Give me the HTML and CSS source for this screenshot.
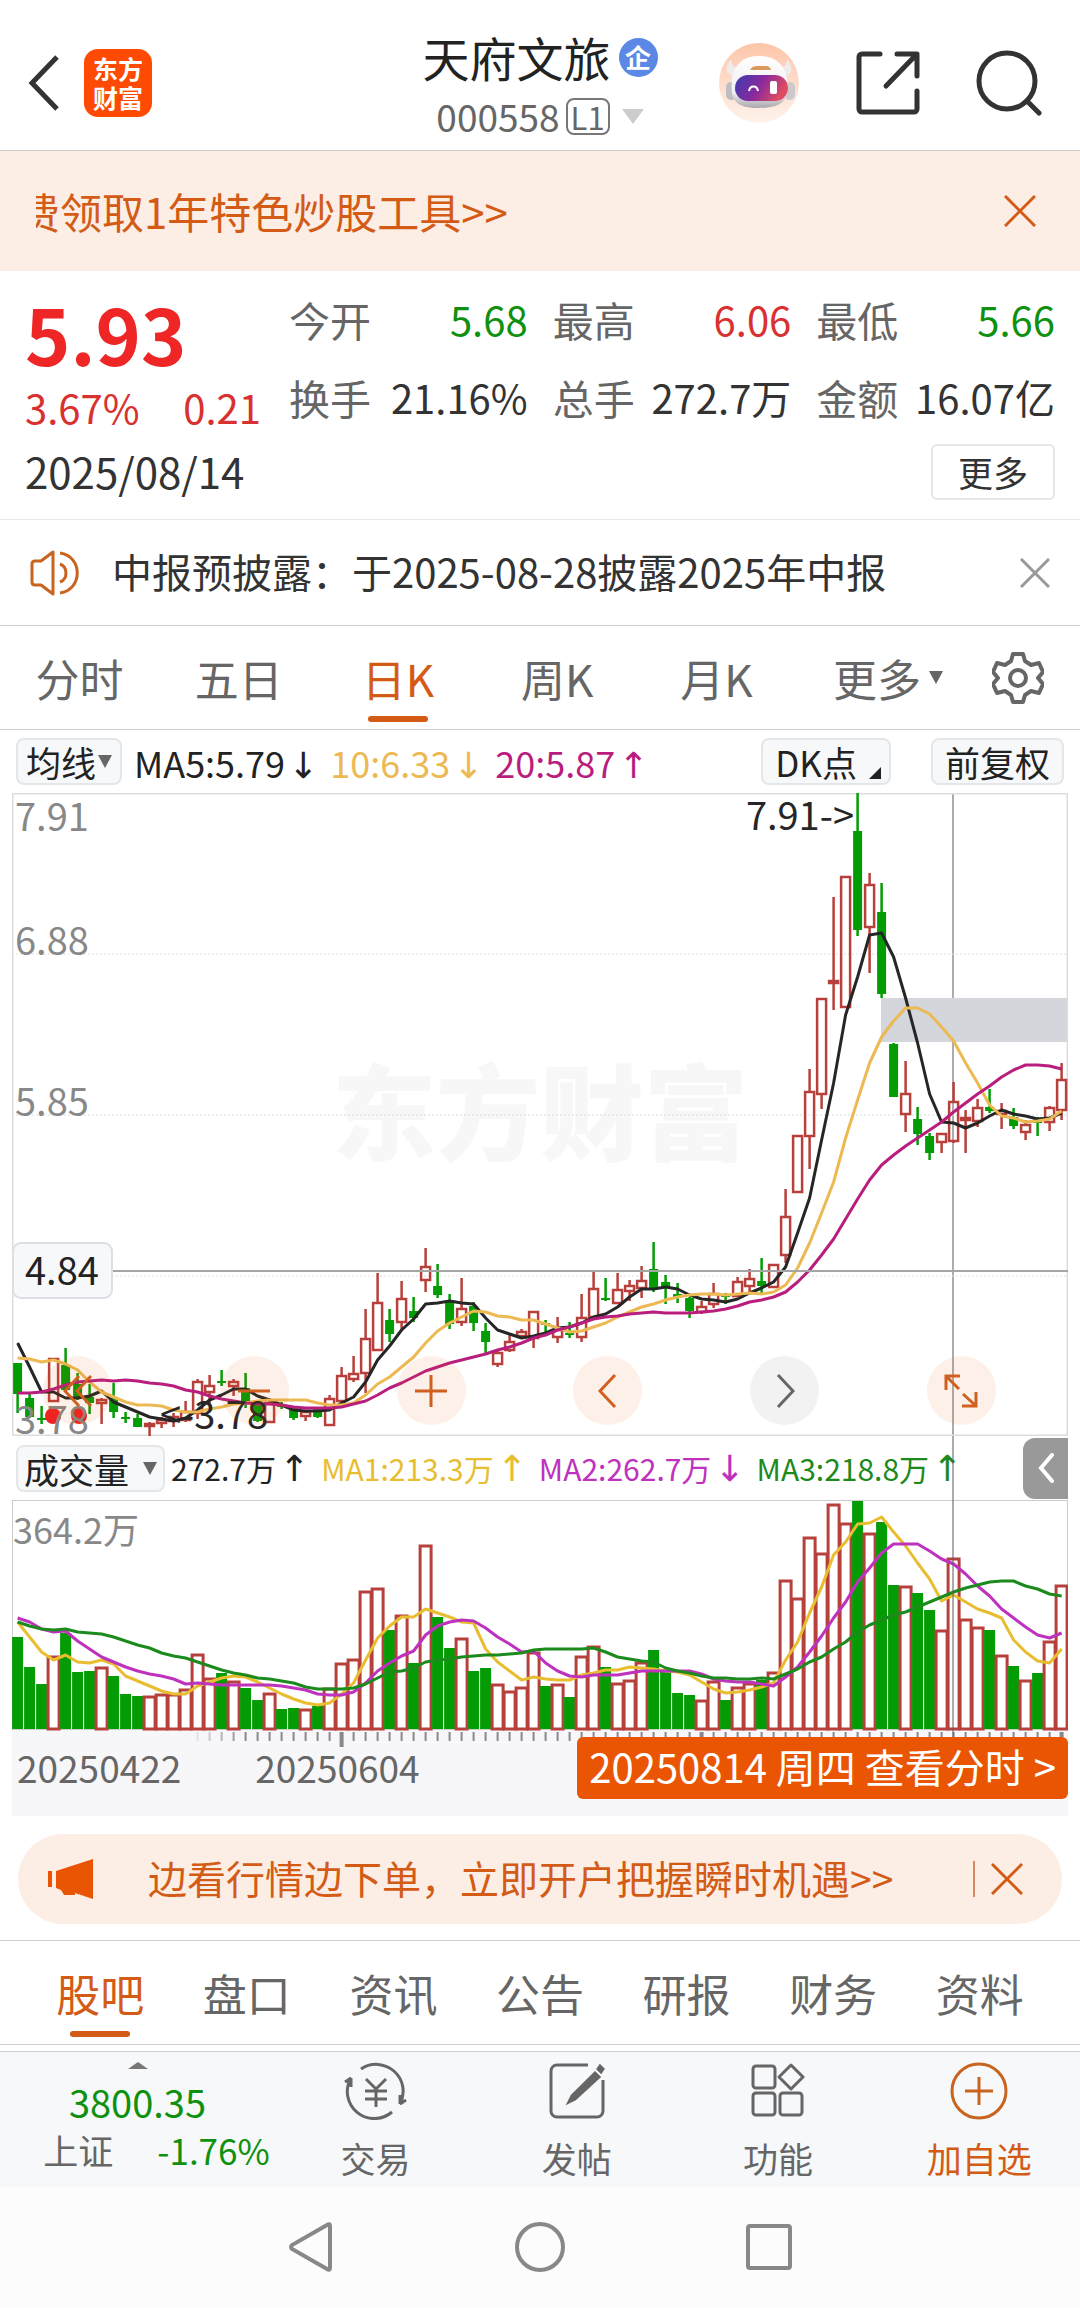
FILE: index.html
```html
<!DOCTYPE html>
<html lang="zh-CN">
<head>
    <meta charset="UTF-8">
    <meta name="viewport" content="width=device-width, initial-scale=1">
    <title>天府文旅 000558</title>
    <link rel="stylesheet" href="styles.css">
</head>
<body>
    <header class="header">
        <div class="header-left">
            <button class="icon-btn" aria-label="返回">
                <svg width="32" height="56" viewBox="0 0 32 56" fill="none" stroke="#333" stroke-width="5"><path d="M29 2 4 28l25 26"/></svg>
            </button>
            <a class="logo" href="#"><span>东方</span><span>财富</span></a>
        </div>
        <div class="header-title">
            <h1>天府文旅<span class="badge">企</span></h1>
            <p class="code">000558<span class="level">L1</span>
                <svg width="22" height="15" viewBox="0 0 22 15" fill="#ccc"><path d="M0 0h22L11 15z"/></svg>
            </p>
        </div>
        <div class="header-right">
            <button class="icon-btn" aria-label="智能助手">
                <svg width="82" height="82" viewBox="0 0 82 82">
                    <defs>
                        <linearGradient id="robotBg" x1="0" y1="0" x2="0" y2="1"><stop offset="0" stop-color="#fdc5a8"/><stop offset="1" stop-color="#fff3ec"/></linearGradient>
                        <linearGradient id="robotFace" x1="0" y1="0" x2="1" y2="0.3"><stop offset="0" stop-color="#3b3bb0"/><stop offset="0.55" stop-color="#8a2a9c"/><stop offset="1" stop-color="#e04a62"/></linearGradient>
                        <linearGradient id="robotHead" x1="0" y1="0" x2="0" y2="1"><stop offset="0" stop-color="#fff"/><stop offset="0.7" stop-color="#f1eef1"/><stop offset="1" stop-color="#a9a6ad"/></linearGradient>
                    </defs>
                    <circle cx="41" cy="41" r="40" fill="url(#robotBg)"/>
                    <path d="M13 17c-7 8-5 15 2 18l9-8c-6 0-11-3-11-10zM69 17c7 8 5 15-2 18l-9-8c6 0 11-3 11-10z" fill="#f1eaea"/>
                    <rect x="8" y="40" width="11" height="18" rx="5" fill="#c0bcc3"/>
                    <rect x="66" y="40" width="11" height="18" rx="5" fill="#cfc9ce"/>
                    <path d="M41 14c16 0 25 8 28 22 3 20-2 30-28 30S12 56 14 36c3-14 11-22 27-22z" fill="url(#robotHead)"/>
                    <path d="M32 28q2-4 7-4h9q4 0 5 4z" fill="#d99a5b"/>
                    <rect x="17" y="33" width="53" height="26" rx="13" fill="url(#robotFace)"/>
                    <path d="M31 49c1-6 8-6 9 0" fill="none" stroke="#fff" stroke-width="2"/>
                    <rect x="52" y="39" width="7" height="13" rx="2" fill="#fff"/>
                </svg>
            </button>
            <button class="icon-btn" aria-label="分享">
                <svg width="64" height="64" viewBox="0 0 64 64" fill="none" stroke="#333" stroke-width="5" stroke-linecap="round" stroke-linejoin="round"><path d="M24 3H6a3 3 0 0 0-3 3v52a3 3 0 0 0 3 3h52a3 3 0 0 0 3-3V40M41 3h20v22M60 4 30 35"/></svg>
            </button>
            <button class="icon-btn" aria-label="搜索">
                <svg width="66" height="66" viewBox="0 0 66 66" fill="none" stroke="#333" stroke-width="5" stroke-linecap="round"><circle cx="31" cy="31" r="28"/><path d="m51 51 12 12"/></svg>
            </button>
        </div>
    </header>

    <div class="banner">
        <p>费领取1年特色炒股工具&gt;&gt;</p>
        <button class="icon-btn" aria-label="关闭">
            <svg width="32" height="32" viewBox="0 0 32 32" fill="none" stroke="#d35b16" stroke-width="3"><path d="m1 1 30 30M31 1 1 31"/></svg>
        </button>
    </div>

    <section class="quote">
        <div class="quote-main">
            <strong class="price up">5.93</strong>
            <p class="change up"><span>3.67%</span><span>0.21</span></p>
            <p class="date">2025/08/14</p>
        </div>
        <dl class="quote-grid">
            <div><dt>今开</dt><dd class="down">5.68</dd></div>
            <div><dt>最高</dt><dd class="up">6.06</dd></div>
            <div><dt>最低</dt><dd class="down">5.66</dd></div>
            <div><dt>换手</dt><dd>21.16%</dd></div>
            <div><dt>总手</dt><dd>272.7万</dd></div>
            <div><dt>金额</dt><dd>16.07亿</dd></div>
        </dl>
        <button class="quote-more">更多</button>
    </section>

    <div class="notice">
        <svg width="50" height="46" viewBox="0 0 50 46" fill="none" stroke="#c8641e" stroke-width="3" stroke-linejoin="round"><path d="M2 14q0-3 3-3h6L23 2v42l-12-9H5q-3 0-3-3zM30 14c8 3 8 15 0 18M30 3c23 3 23 37 0 40"/></svg>
        <p>中报预披露：于2025-08-28披露2025年中报</p>
        <button class="icon-btn" aria-label="关闭">
            <svg width="30" height="30" viewBox="0 0 30 30" fill="none" stroke="#999" stroke-width="3"><path d="m1 1 28 28M29 1 1 29"/></svg>
        </button>
    </div>

    <nav class="tabs period-tabs">
        <button>分时</button>
        <button>五日</button>
        <button class="active">日K</button>
        <button>周K</button>
        <button>月K</button>
        <button>更多<span class="caret"></span></button>
        <button aria-label="设置">
            <svg width="52" height="52" viewBox="0 0 52 52" fill="none" stroke="#666" stroke-width="4" stroke-linejoin="round"><path d="M21 2h10l2 7 6 4 8-2 4 9-5 6 5 6-4 9-8-2-6 4-2 7H21l-2-7-6-4-8 2-4-9 5-6-5-6 4-9 8 2 6-4z"/><circle cx="26" cy="26" r="8"/></svg>
        </button>
    </nav>

    <main class="chart">
        <div class="indicator-row">
            <button class="chip">均线<span class="caret"></span></button>
            <span class="ma-black">MA5:5.79<i class="arrow">↓</i></span>
            <span class="ma-yellow">10:6.33<i class="arrow">↓</i></span>
            <span class="ma-pink">20:5.87<i class="arrow">↑</i></span>
            <button class="chip chip-dk">DK点<span class="corner"></span></button>
            <button class="chip">前复权</button>
        </div>

        <div class="plot">
            <div class="crosshair"></div>
            <div class="price-box">
                <svg id="priceChart" viewBox="0 0 1056 643"></svg>
                <div class="chart-tools">
                    <button aria-label="最前"><svg width="30" height="34" viewBox="0 0 30 34"><path d="M16 2 2 17l14 15M28 2 14 17l14 15"/></svg></button>
                    <button aria-label="缩小"><svg width="34" height="34" viewBox="0 0 34 34"><path d="M1 17h32"/></svg></button>
                    <button aria-label="放大"><svg width="34" height="34" viewBox="0 0 34 34"><path d="M1 17h32M17 1v32"/></svg></button>
                    <button aria-label="左移"><svg width="20" height="34" viewBox="0 0 20 34"><path d="M17 1 2 17l15 16"/></svg></button>
                    <button aria-label="右移" class="disabled"><svg width="20" height="34" viewBox="0 0 20 34"><path d="m3 1 15 16L3 33"/></svg></button>
                    <button aria-label="全屏"><svg width="34" height="34" viewBox="0 0 34 34"><path d="M16 2H2v14M3 3l12 12M18 32h14V18M31 31 19 20"/></svg></button>
                </div>
            </div>
            <div class="indicator-row volume-row">
                <button class="chip">成交量<span class="caret"></span></button>
                <span class="ma-black">272.7万<i class="arrow">↑</i></span>
                <span class="vol-yellow">MA1:213.3万<i class="arrow">↑</i></span>
                <span class="vol-purple">MA2:262.7万<i class="arrow">↓</i></span>
                <span class="vol-green">MA3:218.8万<i class="arrow">↑</i></span>
                <button class="drawer" aria-label="展开">
                    <svg width="16" height="30" viewBox="0 0 16 30" fill="none" stroke="#fff" stroke-width="4" stroke-linecap="round"><path d="M14 2 3 15l11 13"/></svg>
                </button>
            </div>
            <svg id="volumeChart" viewBox="0 0 1056 248"></svg>
        </div>

        <div class="axis">
            <span>20250422</span>
            <span>20250604</span>
            <button>20250814 周四 查看分时 &gt;</button>
        </div>
    </main>

    <div class="promo">
        <svg width="46" height="40" viewBox="0 0 46 40" fill="#ea5504"><path d="M0 12h4v16H0zM8 12 45 0v40l-18-6v2H16l-3-5-5-2z"/></svg>
        <p>边看行情边下单，立即开户把握瞬时机遇&gt;&gt;</p>
        <button class="icon-btn" aria-label="关闭">
            <svg width="32" height="32" viewBox="0 0 32 32" fill="none" stroke="#d35b16" stroke-width="3"><path d="m1 1 30 30M31 1 1 31"/></svg>
        </button>
    </div>

    <nav class="tabs info-tabs">
        <button class="active">股吧</button>
        <button>盘口</button>
        <button>资讯</button>
        <button>公告</button>
        <button>研报</button>
        <button>财务</button>
        <button>资料</button>
    </nav>

    <footer class="toolbar">
        <a class="index" href="#">
            <svg width="20" height="7" viewBox="0 0 20 7" fill="#777"><path d="M0 7h20L10 0z"/></svg>
            <span class="index-value down">3800.35</span>
            <span class="index-row"><span>上证</span><span class="down">-1.76%</span></span>
        </a>
        <a href="#">
            <svg width="66" height="58" viewBox="0 0 66 58" fill="none" stroke="#666" stroke-width="3"><path d="M18 7a27 27 0 0 1 39 35l6-4M57 42v-9M49 50A27 27 0 0 1 8 16l-6 4M8 16v9M23 17l10 10 10-10M33 27v18M22 29h22M22 37h22"/></svg>
            交易
        </a>
        <a href="#">
            <svg width="56" height="58" viewBox="0 0 56 58" fill="none" stroke="#666" stroke-width="3"><path d="M39 3H8a6 6 0 0 0-6 6v40a6 6 0 0 0 6 6h40a6 6 0 0 0 6-6V18"/><path d="m46 11 4 4-24 22-6 3 3-6zM49 7l2-3 3 3-2 3z" fill="#666"/></svg>
            发帖
        </a>
        <a href="#">
            <svg width="54" height="58" viewBox="0 0 54 58" fill="none" stroke="#666" stroke-width="3" stroke-linejoin="round"><rect x="2" y="4" width="22" height="22" rx="3"/><rect x="2" y="31" width="22" height="22" rx="3"/><rect x="29" y="31" width="22" height="22" rx="3"/><path d="m40 3 12 12-12 12-12-12z"/></svg>
            功能
        </a>
        <a class="add" href="#">
            <svg width="58" height="58" viewBox="0 0 58 58" fill="none" stroke="#c8641e" stroke-width="3"><circle cx="29" cy="29" r="27"/><path d="M15 29h28M29 15v28"/></svg>
            加自选
        </a>
    </footer>

    <nav class="system-nav">
        <button class="icon-btn" aria-label="返回"><svg width="46" height="50" viewBox="0 0 46 50"><path d="M42 4v42q0 3-3 1L4 27q-2-2 0-4L39 3q3-2 3 1z"/></svg></button>
        <button class="icon-btn" aria-label="主屏幕"><svg width="50" height="50" viewBox="0 0 50 50"><circle cx="25" cy="25" r="23"/></svg></button>
        <button class="icon-btn" aria-label="最近任务"><svg width="46" height="46" viewBox="0 0 46 46"><rect x="2" y="2" width="42" height="42" rx="2"/></svg></button>
    </nav>

    <script src="chart.js"></script>
</body>
</html>
```
FILE: styles.css
```css
* {
    box-sizing: border-box;
}

body {
    margin: 0;
    background: #fff;
    color: #333;
    font-family: "Noto Sans CJK SC", "Noto Sans", sans-serif;
    font-size: 40px;
}

h1, p, dl, dd {
    margin: 0;
}

h1 {
    font-weight: normal;
}

a {
    color: inherit;
    text-decoration: none;
}

button {
    padding: 0;
    border: none;
    background: none;
    color: inherit;
    font: inherit;
    cursor: pointer;
}

svg {
    display: block;
}

.icon-btn {
    display: flex;
    align-items: center;
    justify-content: center;
}

.up {
    color: #d93030;
}

.down {
    color: #0f910f;
}

/* header */
.header {
    display: grid;
    grid-template-columns: 1fr auto 1fr;
    align-items: center;
    min-height: 151px;
    padding: 16px 28px 0;
    border-bottom: 1px solid #ccc;
}

.header-left {
    display: flex;
    align-items: center;
    gap: 24px;
}

.logo {
    display: flex;
    flex-direction: column;
    align-items: center;
    justify-content: center;
    width: 68px;
    height: 68px;
    border-radius: 14px;
    background: #fe4a02;
    color: #fff;
    font-size: 25px;
    font-weight: bold;
    line-height: 29px;
}

.header-title {
    padding-top: 8px;
    text-align: center;
}

.header-title h1 {
    display: flex;
    align-items: center;
    justify-content: center;
    gap: 8px;
    color: #222;
    font-size: 47px;
    line-height: 58px;
}

.badge {
    width: 39px;
    height: 39px;
    border-radius: 50%;
    background: #5b87e5;
    color: #fff;
    font-size: 26px;
    font-weight: bold;
    line-height: 37px;
}

.code {
    display: flex;
    align-items: center;
    justify-content: center;
    gap: 6px;
    color: #666;
    font-size: 37px;
    line-height: 60px;
}

.level {
    padding: 0 3px;
    margin-right: 6px;
    border: 2px solid #777;
    border-radius: 8px;
    font-size: 31px;
    line-height: 33px;
}

.header-right {
    display: flex;
    align-items: center;
    justify-content: flex-end;
    gap: 56px;
    margin-right: 10px;
}

/* top banner */
.banner {
    display: flex;
    align-items: center;
    justify-content: space-between;
    min-height: 120px;
    padding: 0 44px 0 36px;
    background: #fceee5;
    color: #d35b16;
}

.banner p {
    overflow: hidden;
    font-size: 42px;
    line-height: 60px;
    text-indent: -18px;
    white-space: nowrap;
}

/* quote */
.quote {
    display: grid;
    grid-template-columns: 264px 1fr;
    padding: 12px 25px 14px;
    border-bottom: 1px solid #e8e8e8;
}

.quote-main {
    grid-row: span 2;
    padding-top: 6px;
}

.price {
    display: block;
    color: #ee2626;
    font-size: 77px;
    line-height: 88px;
}

.change {
    display: flex;
    justify-content: space-between;
    width: 236px;
    line-height: 60px;
}

.date {
    font-size: 42px;
    line-height: 68px;
}

.quote-grid {
    display: grid;
    grid-template-columns: repeat(3, 1fr);
    column-gap: 25px;
    line-height: 73px;
}

.quote-grid div {
    display: flex;
    justify-content: space-between;
}

.quote-grid dt {
    color: #666;
    font-size: 41px;
}

.quote-more {
    justify-self: end;
    align-self: center;
    width: 124px;
    height: 56px;
    border: 2px solid #e6e6e6;
    border-radius: 6px;
    font-size: 35px;
    line-height: 48px;
}

/* notice */
.notice {
    display: flex;
    align-items: center;
    gap: 32px;
    min-height: 106px;
    padding: 0 30px;
    border-bottom: 1px solid #ccc;
    font-size: 40px;
}

.notice p {
    flex: 1;
    line-height: 50px;
    padding-bottom: 4px;
}

/* tabs */
.tabs {
    display: grid;
    border-bottom: 1px solid #ccc;
    color: #666;
    font-size: 44px;
    line-height: 66px;
}

.tabs button {
    display: flex;
    align-items: center;
    justify-content: center;
    position: relative;
    height: 103px;
}

.tabs .active {
    color: #d35b16;
}

.tabs .active::after {
    content: "";
    position: absolute;
    bottom: 7px;
    left: 50%;
    width: 60px;
    height: 6px;
    margin-left: -30px;
    border-radius: 3px;
    background: #d35b16;
}

.period-tabs {
    grid-template-columns: repeat(5, 1fr) 184px 76px;
    padding-right: 24px;
}

.caret {
    width: 0;
    border: 7px solid transparent;
    border-top: 13px solid #666;
    border-bottom: none;
}

.period-tabs .caret {
    margin-left: 8px;
}

/* chart */
.chart {
    padding: 0 12px;
}

.indicator-row {
    display: flex;
    align-items: center;
    gap: 12px;
    height: 63px;
    padding: 0 4px;
    font-size: 36px;
    line-height: 50px;
    white-space: nowrap;
}

.chip {
    display: flex;
    align-items: center;
    gap: 2px;
    height: 47px;
    padding: 0 8px;
    border: 2px solid #e4e7ea;
    border-radius: 8px;
    background: #f6f8fa;
    color: #222;
    font-size: 35px;
    line-height: 43px;
}

.chip-dk {
    gap: 12px;
    margin-left: auto;
    margin-right: 28px;
    padding: 0 8px 0 12px;
}

.chip:last-child {
    padding: 0 12px;
}

.corner {
    align-self: flex-end;
    margin-bottom: 4px;
    border-left: 12px solid transparent;
    border-bottom: 12px solid #222;
}

/* arrow glyphs stand as tall as the figures beside them */
.arrow {
    margin-left: 3px;
    font-family: "Noto Sans", "DejaVu Sans", sans-serif;
    font-style: normal;
    font-size: 36px;
    line-height: 30px;
}

.ma-black {
    color: #222;
}

.ma-yellow {
    color: #ecb953;
}

.ma-pink {
    color: #b91e7e;
}

.vol-yellow {
    color: #e8be30;
}

.vol-purple {
    color: #be32be;
}

.vol-green {
    color: #1c8a1c;
}

.plot {
    position: relative;
}

.crosshair {
    position: absolute;
    top: 0;
    bottom: 0;
    left: 89%;
    width: 2px;
    background: rgba(90, 90, 90, 0.5);
}

.price-box {
    position: relative;
}

#priceChart, #volumeChart {
    width: 100%;
    font-size: 38px;
}

.chart-tools {
    position: absolute;
    right: 0;
    bottom: 11px;
    left: 0;
    display: flex;
    justify-content: space-between;
    padding: 0 72px 0 31px;
}

.chart-tools button {
    display: flex;
    align-items: center;
    justify-content: center;
    width: 69px;
    height: 69px;
    border-radius: 50%;
    background: rgba(234, 85, 4, 0.09);
}

.chart-tools .disabled {
    background: rgba(0, 0, 0, 0.05);
}

.chart-tools svg {
    fill: none;
    stroke: #d06020;
    stroke-width: 3;
}

.chart-tools .disabled svg {
    stroke: #666;
}

.volume-row {
    height: 64px;
    padding-right: 0;
    font-size: 30px;
}

.volume-row .chip {
    gap: 14px;
    margin-right: -6px;
    padding: 0 6px;
}

.drawer {
    display: flex;
    align-items: center;
    justify-content: center;
    width: 45px;
    height: 61px;
    margin-left: auto;
    border-radius: 12px 0 0 12px;
    background: #999;
}

.axis {
    display: flex;
    align-items: flex-start;
    gap: 74px;
    height: 68px;
    padding-left: 5px;
    background: #f7f7fa;
    color: #666;
    font-size: 37px;
    line-height: 38px;
}

.axis button {
    height: 62px;
    margin: -11px 0 0 auto;
    padding: 0 12px 4px;
    border-radius: 6px;
    background: #ea5504;
    color: #fff;
    font-size: 40px;
    z-index: 1;
}

/* promo */
.promo {
    display: flex;
    align-items: center;
    min-height: 90px;
    margin: 18px 18px 16px;
    padding: 0 39px 0 30px;
    border-radius: 45px;
    background: #fceee5;
    color: #d35b16;
    font-size: 39px;
}

.promo p {
    flex: 1;
    padding: 0 0 4px 54px;
    line-height: 50px;
}

.promo .icon-btn {
    height: 36px;
    padding-left: 16px;
    border-left: 2px solid #d98a5a;
}

.info-tabs {
    grid-template-columns: repeat(7, 1fr);
    padding: 0 27px;
    border-top: 1px solid #ccc;
}

/* toolbar */
.toolbar {
    display: grid;
    grid-template-columns: 275px repeat(4, 1fr);
    min-height: 136px;
    margin-top: 6px;
    border-top: 1px solid #ccd0d5;
    background: #f6f8fa;
    color: #666;
    font-size: 35px;
    line-height: 52px;
}

.toolbar a {
    display: flex;
    flex-direction: column;
    align-items: center;
    gap: 12px;
    padding-top: 10px;
}

.toolbar .index {
    gap: 0;
}

.index-value {
    margin-top: 7px;
    font-size: 38px;
    line-height: 52px;
}

.index-row {
    display: flex;
    gap: 44px;
    margin-left: 38px;
    line-height: 44px;
}

.toolbar .add {
    color: #d35b16;
}

.system-nav {
    display: flex;
    align-items: center;
    justify-content: space-between;
    min-height: 120px;
    padding: 0 288px;
    background: #fcfcfc;
}

.system-nav svg {
    fill: none;
    stroke: #888;
    stroke-width: 4;
}
```
FILE: chart.js
```js
const RED = "#b8403c";
const GREEN = "#049c04";
const STEP = 12;
const FIRST_X = 5.6;

// direction, high, body top, body bottom, low
const candles = [
    ["g", 570, 570, 601, 620], ["g", 601, 605, 624, 625], ["g", 613, 625, 627, 631], ["r", 565, 566, 608, 608],
    ["g", 555, 572, 597, 597], ["g", 580, 591, 604, 607], ["g", 591, 604, 610, 621], ["r", 605, 607, 610, 631],
    ["g", 590, 605, 619, 625], ["g", 619, 624, 626, 630], ["g", 621, 625, 634, 634], ["r", 629, 631, 633, 643],
    ["r", 624, 627, 630, 635], ["r", 620, 624, 628, 634], ["r", 608, 619, 627, 629], ["r", 586, 589, 620, 626],
    ["r", 582, 593, 599, 610], ["g", 577, 588, 590, 593], ["r", 586, 589, 593, 603], ["g", 580, 595, 609, 615],
    ["g", 610, 611, 628, 629], ["r", 605, 610, 629, 629], ["g", 609, 612, 614, 616], ["g", 614, 614, 625, 627],
    ["r", 617, 619, 623, 628], ["g", 614, 615, 624, 625], ["r", 602, 606, 632, 633], ["r", 574, 583, 608, 610],
    ["r", 563, 581, 586, 589], ["r", 516, 546, 580, 600], ["r", 480, 510, 557, 558], ["g", 516, 527, 541, 549],
    ["r", 488, 506, 529, 536], ["g", 504, 518, 525, 529], ["r", 455, 474, 487, 499], ["g", 471, 493, 502, 505],
    ["g", 501, 509, 531, 536], ["r", 485, 516, 529, 533], ["g", 509, 513, 530, 538], ["g", 530, 538, 549, 560],
    ["r", 557, 560, 571, 574], ["r", 542, 549, 557, 559], ["r", 536, 539, 543, 546], ["r", 518, 519, 545, 555],
    ["g", 527, 530, 532, 539], ["r", 524, 537, 544, 550], ["g", 529, 540, 542, 545], ["r", 501, 525, 544, 549],
    ["r", 479, 496, 524, 524], ["g", 485, 505, 507, 508], ["r", 480, 497, 510, 510], ["r", 487, 493, 498, 508],
    ["r", 473, 488, 495, 505], ["g", 449, 476, 495, 499], ["g", 482, 489, 495, 511], ["g", 490, 501, 504, 510],
    ["g", 504, 505, 518, 525], ["r", 508, 514, 519, 521], ["r", 490, 501, 511, 515], ["g", 500, 502, 504, 511],
    ["r", 484, 489, 503, 504], ["r", 476, 486, 493, 499], ["g", 465, 488, 493, 501], ["r", 472, 472, 494, 495],
    ["r", 396, 424, 462, 470], ["r", 343, 343, 399, 399], ["r", 276, 299, 343, 376], ["r", 206, 206, 301, 316],
    ["r", 104, 188, 190, 217], ["r", 84, 84, 214, 214], ["g", 0, 38, 137, 143], ["r", 80, 92, 134, 180],
    ["g", 90, 119, 201, 205], ["g", 250, 251, 304, 304], ["r", 268, 301, 321, 339], ["g", 314, 326, 341, 352],
    ["g", 340, 343, 360, 367], ["r", 341, 341, 349, 360], ["r", 289, 309, 348, 350], ["r", 317, 325, 327, 360],
    ["r", 306, 315, 328, 334], ["g", 296, 314, 318, 320], ["r", 310, 318, 321, 336], ["g", 315, 324, 333, 336],
    ["r", 327, 332, 339, 347], ["g", 324, 326, 330, 343], ["r", 313, 315, 329, 338], ["r", 270, 287, 317, 327]
];

const ma5 = [550, 574, 599, 599, 605, 605, 603, 598, 609, 614, 619, 624, 626, 628, 625, 617, 607, 602, 596, 596, 603, 607, 612, 617, 618, 618, 617, 610, 604, 589, 567, 553, 537, 526, 511, 510, 508, 510, 511, 525, 537, 541, 545, 543, 540, 535, 534, 530, 524, 521, 514, 504, 496, 496, 494, 496, 502, 506, 507, 509, 506, 500, 495, 489, 474, 440, 405, 347, 290, 222, 184, 142, 140, 164, 205, 250, 301, 329, 330, 335, 330, 323, 317, 321, 323, 326, 325, 320];
const ma10 = [565, 566, 569, 567, 571, 577, 589, 599, 604, 609, 612, 612, 613, 617, 619, 619, 616, 614, 611, 610, 608, 607, 607, 607, 607, 610, 612, 612, 610, 602, 591, 584, 574, 564, 550, 538, 530, 524, 518, 519, 523, 524, 527, 527, 531, 535, 539, 538, 534, 530, 524, 519, 514, 511, 507, 504, 502, 501, 501, 502, 501, 500, 501, 499, 492, 475, 450, 420, 389, 345, 307, 270, 244, 228, 215, 215, 221, 234, 248, 270, 290, 312, 323, 325, 329, 328, 326, 318];
const ma20 = [600, 600, 599, 596, 592, 589, 588, 587, 588, 587, 588, 590, 591, 593, 597, 599, 603, 606, 608, 610, 611, 611, 612, 614, 615, 615, 615, 614, 611, 608, 602, 595, 590, 584, 578, 574, 570, 567, 564, 561, 557, 554, 550, 545, 542, 537, 534, 530, 526, 524, 523, 521, 520, 519, 520, 520, 520, 519, 518, 516, 513, 509, 507, 504, 499, 489, 477, 462, 446, 426, 406, 387, 372, 362, 353, 345, 337, 329, 319, 310, 301, 293, 284, 277, 272, 272, 273, 276];

const volumes = [137, 167, 184, 156, 133, 172, 171, 167, 176, 194, 196, 196, 194, 194, 189, 154, 178, 173, 181, 188, 200, 193, 209, 208, 209, 206, 188, 163, 159, 91, 88, 130, 115, 163, 45, 117, 148, 138, 171, 168, 184, 191, 187, 152, 186, 184, 197, 156, 146, 167, 183, 180, 162, 150, 172, 193, 195, 200, 181, 200, 187, 183, 180, 172, 80, 98, 37, 53, 4, 23, 1, 33, 22, 85, 86, 93, 110, 130, 58, 119, 127, 130, 155, 166, 180, 173, 141, 85];
const vol1 = [122, 137, 152, 160, 155, 162, 163, 160, 164, 176, 181, 186, 191, 194, 194, 186, 182, 178, 176, 177, 182, 188, 194, 199, 203, 205, 203, 194, 183, 160, 138, 126, 117, 117, 109, 113, 117, 122, 123, 149, 162, 171, 180, 177, 179, 180, 180, 175, 173, 170, 170, 167, 168, 169, 171, 172, 175, 182, 189, 193, 192, 190, 187, 183, 160, 142, 113, 87, 55, 42, 24, 23, 17, 32, 46, 63, 79, 101, 95, 102, 109, 113, 118, 140, 152, 161, 163, 149];
const vol2 = [118, 122, 129, 132, 131, 141, 149, 157, 162, 167, 171, 174, 176, 179, 184, 183, 184, 185, 185, 185, 185, 185, 186, 188, 190, 194, 195, 195, 192, 183, 171, 163, 156, 151, 135, 126, 122, 120, 121, 128, 137, 144, 152, 151, 163, 171, 176, 177, 175, 175, 175, 173, 171, 171, 171, 171, 171, 174, 179, 181, 182, 182, 184, 186, 177, 167, 152, 136, 118, 102, 82, 68, 53, 44, 44, 44, 51, 59, 64, 74, 86, 96, 109, 118, 127, 135, 138, 133];
const vol3 = [122, 126, 129, 130, 129, 132, 133, 134, 137, 141, 145, 148, 153, 156, 158, 162, 166, 170, 173, 175, 178, 179, 181, 183, 187, 189, 189, 189, 188, 184, 178, 172, 171, 168, 162, 160, 159, 157, 156, 155, 155, 154, 153, 150, 149, 149, 149, 149, 148, 152, 157, 159, 161, 162, 168, 171, 173, 176, 178, 178, 179, 179, 178, 179, 174, 169, 162, 157, 149, 142, 132, 125, 120, 115, 112, 107, 102, 97, 92, 88, 85, 82, 81, 81, 86, 89, 94, 96];

function add(parent, name, attrs, text) {
    const el = document.createElementNS("http://www.w3.org/2000/svg", name);
    for (const key in attrs) {
        el.setAttribute(key, attrs[key]);
    }
    if (text) {
        el.textContent = text;
    }
    parent.appendChild(el);
}

function xAt(i) {
    return FIRST_X + STEP * i;
}

function addLine(parent, values, color) {
    const points = values.map((y, i) => xAt(i) + "," + y).join(" ");
    add(parent, "polyline", { points: points, fill: "none", stroke: color, "stroke-width": 3, "stroke-linejoin": "round" });
}

function drawPrice() {
    const svg = document.getElementById("priceChart");
    add(svg, "rect", { x: 0.5, y: 0.5, width: 1055, height: 642, fill: "none", stroke: "#ddd", "stroke-width": 2 });
    add(svg, "text", { x: 528, y: 360, "text-anchor": "middle", "font-size": 104, "font-weight": 900, fill: "#f7f7f7" }, "东方财富");

    [161, 322, 483].forEach(y => {
        add(svg, "path", { d: `M0 ${y}H1056`, stroke: "#ddd", "stroke-width": 1, "stroke-dasharray": "2 2" });
    });
    add(svg, "rect", { x: 869, y: 205, width: 186, height: 44, fill: "#d3d6db" });

    candles.forEach(([dir, high, top, bottom, low], i) => {
        const x = xAt(i);
        const color = dir === "r" ? RED : GREEN;
        add(svg, "path", { d: `M${x} ${high}V${top}M${x} ${bottom}V${low}`, stroke: color, "stroke-width": 2.5 });
        if (dir === "r") {
            add(svg, "rect", { x: x - 4.5, y: top, width: 9, height: Math.max(bottom - top, 1), fill: "none", stroke: color, "stroke-width": 2.5 });
        } else {
            add(svg, "rect", { x: x - 4.5, y: top, width: 9, height: Math.max(bottom - top, 1), fill: color });
        }
    });

    add(svg, "circle", { cx: 41, cy: 623, r: 8, fill: "#ee2222" });
    add(svg, "circle", { cx: 67, cy: 623, r: 8, fill: "#ee2222" });

    addLine(svg, ma5, "#262626");
    addLine(svg, ma10, "#ecb953");
    addLine(svg, ma20, "#b91e7e");

    [["7.91", 38], ["6.88", 162], ["5.85", 323], ["3.78", 641]].forEach(([label, y]) => {
        add(svg, "text", { x: 3, y: y, fill: "#888" }, label);
    });
    add(svg, "text", { x: 842, y: 37, "text-anchor": "end", fill: "#262626" }, "7.91->");
    add(svg, "text", { x: 256, y: 636, "text-anchor": "end", fill: "#262626" }, "<-3.78");

    add(svg, "path", { d: "M100 478H1056", stroke: "#a5a5a5", "stroke-width": 2 });
    add(svg, "rect", { x: 1, y: 450, width: 99, height: 55, rx: 8, fill: "#f6f8fa", stroke: "#dcdfe3", "stroke-width": 2 });
    add(svg, "text", { x: 13, y: 492, fill: "#222" }, "4.84");
}

function drawVolume() {
    const svg = document.getElementById("volumeChart");
    add(svg, "rect", { x: 0, y: 230, width: 1056, height: 18, fill: "#f7f7fa" });
    add(svg, "rect", { x: 0.5, y: 0.5, width: 1055, height: 229, fill: "none", stroke: "#ccc", "stroke-width": 1 });
    add(svg, "text", { x: 1, y: 44, fill: "#888", "font-size": 36 }, "364.2万");

    volumes.forEach((top, i) => {
        const x = xAt(i);
        if (candles[i][0] === "r") {
            add(svg, "rect", { x: x - 5.5, y: top + 1, width: 11, height: 228 - top, fill: "#fff", stroke: RED, "stroke-width": 3 });
        } else {
            add(svg, "rect", { x: x - 5.5, y: top, width: 11, height: 229 - top, fill: GREEN });
        }
        // date ticks, a longer one every 30 days
        if (i >= 15) {
            const major = i % 30 === 27;
            add(svg, "path", { d: `M${x} 232V${major ? 247 : 241}`, stroke: "#888", "stroke-width": major ? 4 : 2, opacity: Math.min(1, (i - 14) / 5) });
        }
    });

    addLine(svg, vol1, "#e8be30");
    addLine(svg, vol2, "#be32be");
    addLine(svg, vol3, "#1c8a1c");
}

drawPrice();
drawVolume();
```
